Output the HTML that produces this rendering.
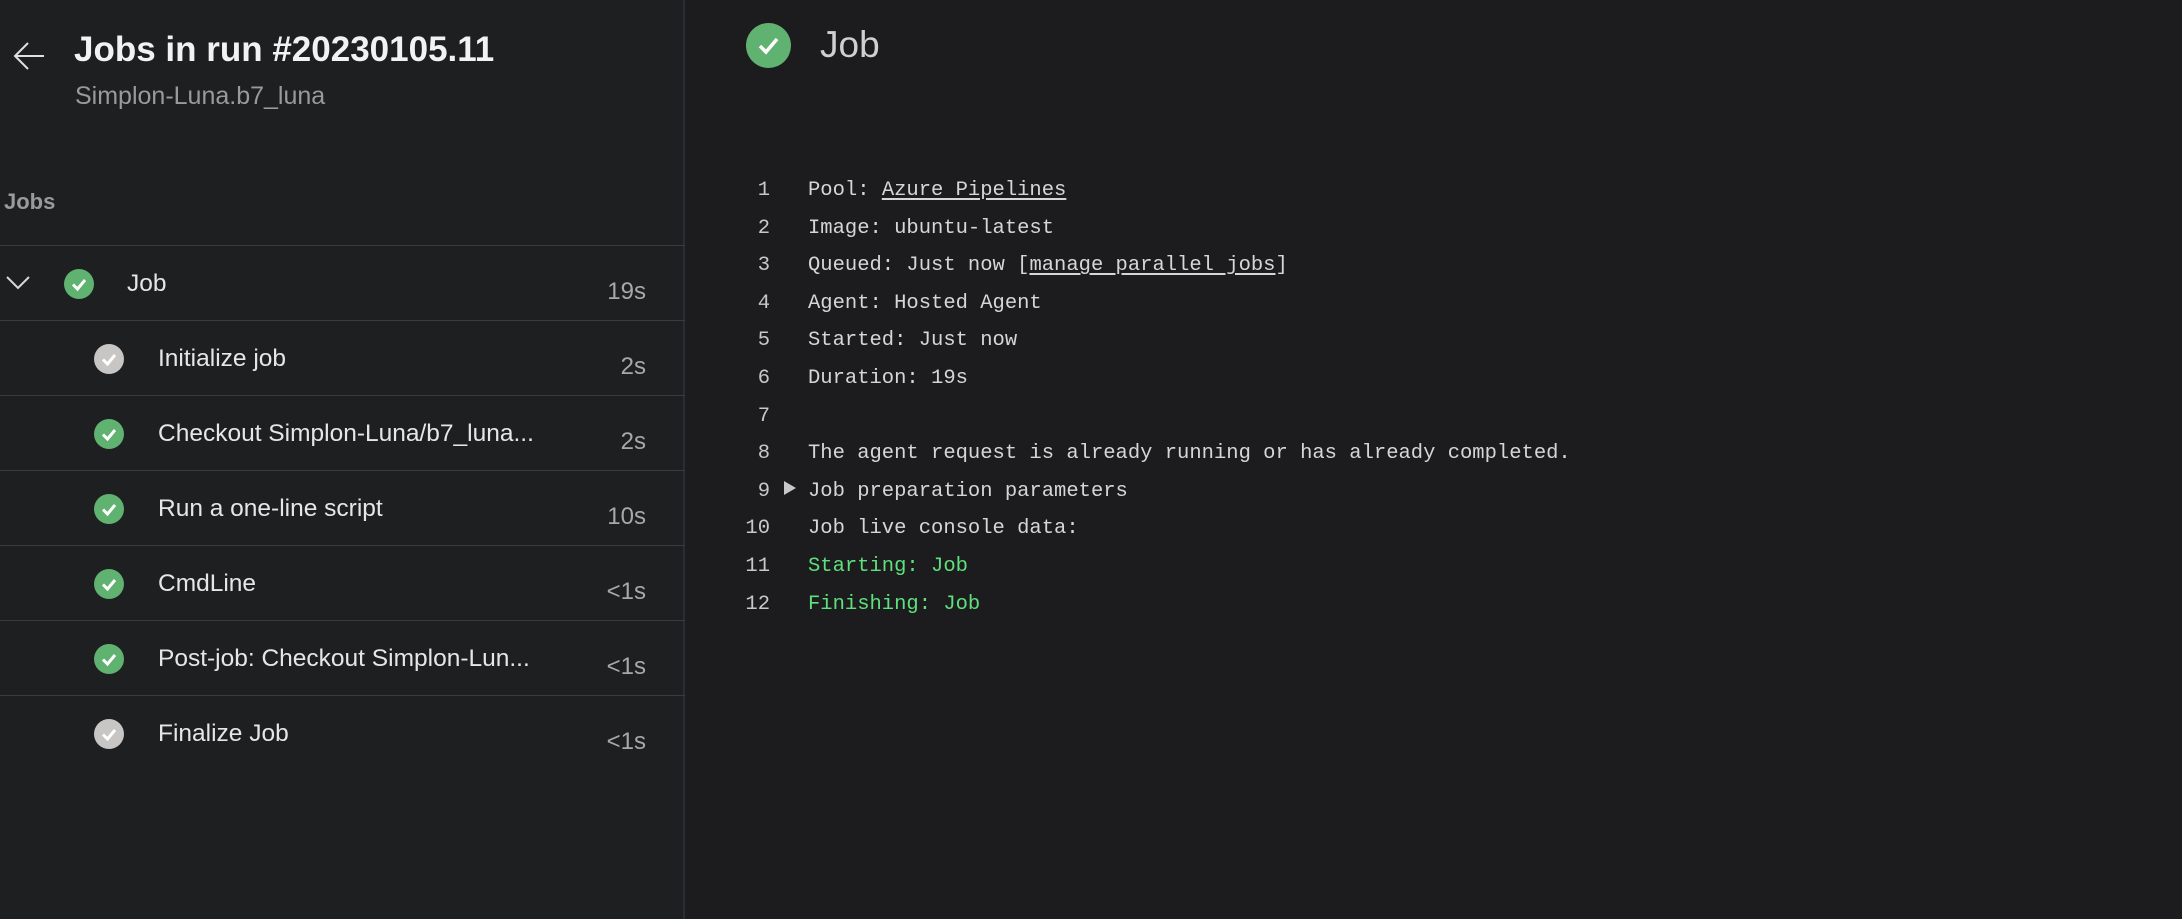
<!DOCTYPE html>
<html><head><meta charset="utf-8"><style>
*{margin:0;padding:0;box-sizing:border-box}
body{width:2182px;height:919px;background:#1c1c1e;font-family:"Liberation Sans",sans-serif;overflow:hidden;position:relative}
.left{position:absolute;left:0;top:0;width:685px;height:919px;background:#1e1f21;border-right:2px solid #2c2d30}
.t{position:absolute;white-space:nowrap}
.row{position:absolute;left:0;width:685px;height:75px;border-top:1px solid #3a3b3e}
.c{position:absolute;width:30px;height:30px;border-radius:50%;background:#5fb26f}
.c.g{background:#c8c6c4}
.c svg{position:absolute;left:0;top:0}
.name{position:absolute;font-size:24.5px;color:#e6e6e6;top:24px;white-space:nowrap}
.dur{position:absolute;right:39px;font-size:24px;color:#a8a8a8;top:32px}
.code{position:absolute;font-family:"Liberation Mono",monospace;font-size:20.5px;color:#d6d6d6;white-space:pre}
.ln{position:absolute;width:70px;text-align:right;left:700px}
.gr{color:#5ee07c}
u{text-underline-offset:3px}
</style></head><body>
<div class="left">
<svg class="t" style="left:12px;top:40px" width="34" height="32" viewBox="0 0 34 32"><path d="M16 3 L3 16 L16 29 M3 16 H32" stroke="#e0e0e0" stroke-width="2" fill="none"/></svg>
<div class="t" style="left:74px;top:30px;font-size:35px;font-weight:bold;color:#f2f2f2;letter-spacing:0px">Jobs in run #20230105.11</div>
<div class="t" style="left:75px;top:82px;font-size:25px;color:#9a9a9a">Simplon-Luna.b7_luna</div>
<div class="t" style="left:4px;top:189px;font-size:22px;font-weight:bold;color:#9a9a9a">Jobs</div>

<div class="row" style="top:245px">
<svg class="t" style="left:6px;top:30px" width="24" height="14"><path d="M1 1 L12 12 L23 1" stroke="#d8d8d8" stroke-width="2" fill="none"/></svg>
<div class="c" style="left:64px;top:23px"><svg width="30" height="30"><path d="M9 15.5 L13.5 20 L21 11" stroke="#fff" stroke-width="3" fill="none"/></svg></div>
<div class="name" style="left:127px">Job</div><div class="dur">19s</div></div>

<div class="row" style="top:320px"><div class="c g" style="left:94px;top:23px"><svg width="30" height="30"><path d="M9 15.5 L13.5 20 L21 11" stroke="#fff" stroke-width="3" fill="none"/></svg></div><div class="name" style="left:158px">Initialize job</div><div class="dur">2s</div></div>
<div class="row" style="top:395px"><div class="c" style="left:94px;top:23px"><svg width="30" height="30"><path d="M9 15.5 L13.5 20 L21 11" stroke="#fff" stroke-width="3" fill="none"/></svg></div><div class="name" style="left:158px">Checkout Simplon-Luna/b7_luna...</div><div class="dur">2s</div></div>
<div class="row" style="top:470px"><div class="c" style="left:94px;top:23px"><svg width="30" height="30"><path d="M9 15.5 L13.5 20 L21 11" stroke="#fff" stroke-width="3" fill="none"/></svg></div><div class="name" style="left:158px">Run a one-line script</div><div class="dur">10s</div></div>
<div class="row" style="top:545px"><div class="c" style="left:94px;top:23px"><svg width="30" height="30"><path d="M9 15.5 L13.5 20 L21 11" stroke="#fff" stroke-width="3" fill="none"/></svg></div><div class="name" style="left:158px">CmdLine</div><div class="dur">&lt;1s</div></div>
<div class="row" style="top:620px"><div class="c" style="left:94px;top:23px"><svg width="30" height="30"><path d="M9 15.5 L13.5 20 L21 11" stroke="#fff" stroke-width="3" fill="none"/></svg></div><div class="name" style="left:158px">Post-job: Checkout Simplon-Lun...</div><div class="dur">&lt;1s</div></div>
<div class="row" style="top:695px"><div class="c g" style="left:94px;top:23px"><svg width="30" height="30"><path d="M9 15.5 L13.5 20 L21 11" stroke="#fff" stroke-width="3" fill="none"/></svg></div><div class="name" style="left:158px">Finalize Job</div><div class="dur">&lt;1s</div></div>
</div>

<div class="c" style="left:746px;top:23px;width:45px;height:45px"><svg width="45" height="45"><path d="M14 23 L20 29 L31 16" stroke="#fff" stroke-width="3.5" fill="none"/></svg></div>
<div class="t" style="left:820px;top:24px;font-size:37px;color:#d0d0d0">Job</div>

<div class="code ln" style="top:172px;line-height:37.6px;color:#c8c8c8">1
2
3
4
5
6
7
8
9
10
11
12</div>
<svg class="t" style="left:784px;top:481px" width="12" height="14"><path d="M0 0 L12 7 L0 14Z" fill="#c8c8c8"/></svg>
<div class="code" style="left:808px;top:172px;line-height:37.6px">Pool: <u>Azure Pipelines</u>
Image: ubuntu-latest
Queued: Just now [<u>manage parallel jobs</u>]
Agent: Hosted Agent
Started: Just now
Duration: 19s

The agent request is already running or has already completed.
Job preparation parameters
Job live console data:
<span class="gr">Starting: Job</span>
<span class="gr">Finishing: Job</span></div>
</body></html>
